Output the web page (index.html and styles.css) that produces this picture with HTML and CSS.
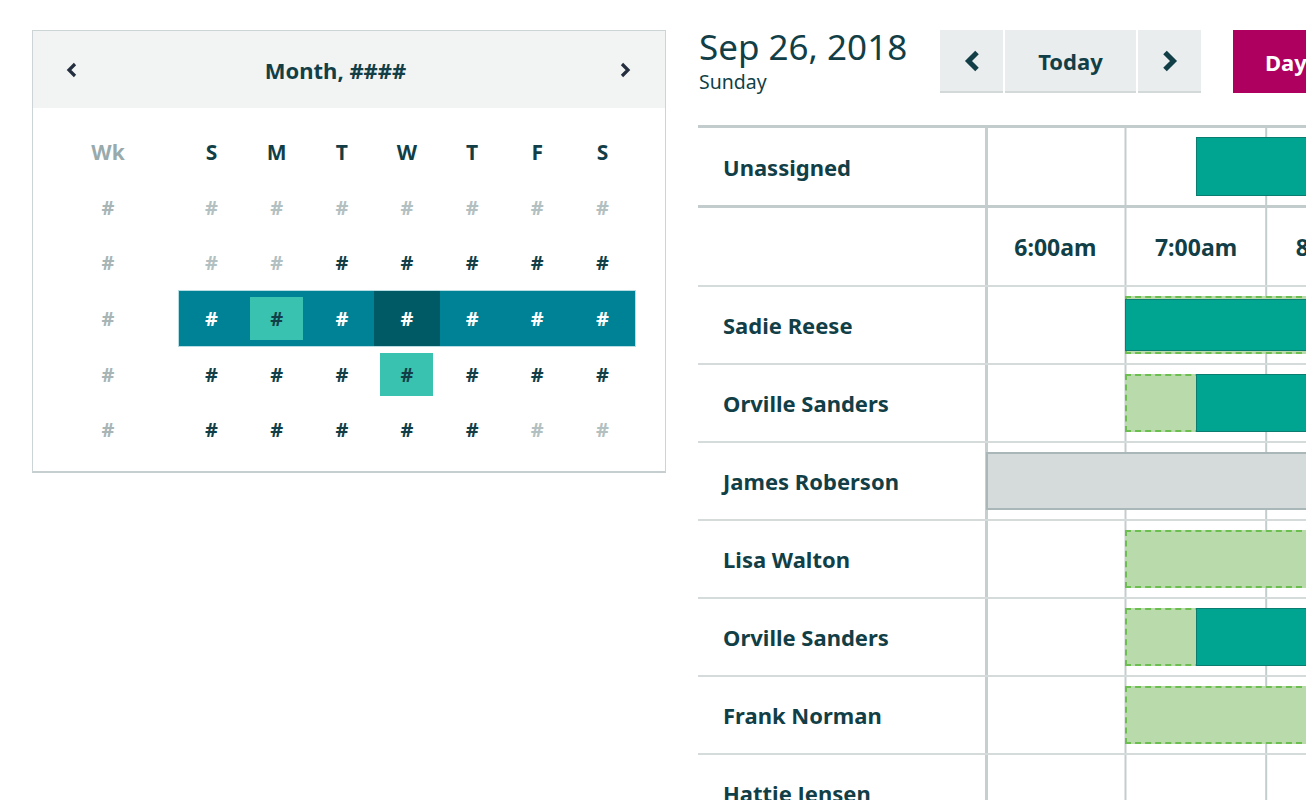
FILE: index.html
```html
<!DOCTYPE html>
<html lang="en">
<head>
<meta charset="utf-8">
<title>Schedule</title>
<link rel="stylesheet" href="styles.css">
</head>
<body>
<div class="page">
  <section class="cal">
    <div class="cal-head">
      <span class="cal-nav"><svg width="11" height="16" viewBox="0 0 11 16"><path d="M9 2 L3 8 L9 14" fill="none" stroke="#232f3e" stroke-width="3.2"/></svg></span>
      <div class="cal-title">Month, ####</div>
      <span class="cal-nav"><svg width="11" height="16" viewBox="0 0 11 16"><path d="M2 2 L8 8 L2 14" fill="none" stroke="#232f3e" stroke-width="3.2"/></svg></span>
    </div>
    <div class="cal-body">
      <div class="cal-row dow">
        <div class="wk wk-label">Wk</div>
        <div class="week">
          <div class="d">S</div><div class="d">M</div><div class="d">T</div><div class="d">W</div><div class="d">T</div><div class="d">F</div><div class="d">S</div>
        </div>
      </div>
      <div class="cal-row">
        <div class="wk">#</div>
        <div class="week">
          <div class="d muted">#</div><div class="d muted">#</div><div class="d muted">#</div><div class="d muted">#</div><div class="d muted">#</div><div class="d muted">#</div><div class="d muted">#</div>
        </div>
      </div>
      <div class="cal-row">
        <div class="wk">#</div>
        <div class="week">
          <div class="d muted">#</div><div class="d muted">#</div><div class="d">#</div><div class="d">#</div><div class="d">#</div><div class="d">#</div><div class="d">#</div>
        </div>
      </div>
      <div class="cal-row">
        <div class="wk">#</div>
        <div class="week selected">
          <div class="d">#</div><div class="d"><span class="mark">#</span></div><div class="d">#</div><div class="d current">#</div><div class="d">#</div><div class="d">#</div><div class="d">#</div>
        </div>
      </div>
      <div class="cal-row">
        <div class="wk">#</div>
        <div class="week">
          <div class="d">#</div><div class="d">#</div><div class="d">#</div><div class="d"><span class="mark">#</span></div><div class="d">#</div><div class="d">#</div><div class="d">#</div>
        </div>
      </div>
      <div class="cal-row">
        <div class="wk">#</div>
        <div class="week">
          <div class="d">#</div><div class="d">#</div><div class="d">#</div><div class="d">#</div><div class="d">#</div><div class="d muted">#</div><div class="d muted">#</div>
        </div>
      </div>
    </div>
  </section>

  <section class="sched">
    <header class="sched-head">
      <div class="date">
        <div class="date-main">Sep 26, 2018</div>
        <div class="date-sub">Sunday</div>
      </div>
      <div class="btn-group">
        <button class="btn btn-icon"><svg width="18" height="22" viewBox="0 0 18 22"><path d="M14 2.5 L5.5 11 L14 19.5" fill="none" stroke="#123f47" stroke-width="5"/></svg></button>
        <button class="btn btn-today">Today</button>
        <button class="btn btn-icon"><svg width="18" height="22" viewBox="0 0 18 22"><path d="M4 2.5 L12.5 11 L4 19.5" fill="none" stroke="#123f47" stroke-width="5"/></svg></button>
      </div>
      <button class="btn-day">Day</button>
    </header>

    <div class="grid">
      <div class="row row-unassigned">
        <div class="name">Unassigned</div>
        <div class="track">
          <div class="bar bar-teal" style="left:208px"></div>
        </div>
      </div>
      <div class="row row-times">
        <div class="name"></div>
        <div class="track times">
          <div class="time">6:00am</div>
          <div class="time">7:00am</div>
          <div class="time">8:00am</div>
          <div class="time">9:00am</div>
        </div>
      </div>
      <div class="row">
        <div class="name">Sadie Reese</div>
        <div class="track">
          <div class="bar bar-avail" style="left:137px">
            <div class="inner inner-full" style="left:-2px"></div>
          </div>
        </div>
      </div>
      <div class="row">
        <div class="name">Orville Sanders</div>
        <div class="track">
          <div class="bar bar-avail" style="left:137px">
            <div class="inner inner-edge" style="left:69px"></div>
          </div>
        </div>
      </div>
      <div class="row">
        <div class="name">James Roberson</div>
        <div class="track">
          <div class="bar bar-off" style="left:-2px"></div>
        </div>
      </div>
      <div class="row">
        <div class="name">Lisa Walton</div>
        <div class="track">
          <div class="bar bar-avail" style="left:137px"></div>
        </div>
      </div>
      <div class="row">
        <div class="name">Orville Sanders</div>
        <div class="track">
          <div class="bar bar-avail" style="left:137px">
            <div class="inner inner-edge" style="left:69px"></div>
          </div>
        </div>
      </div>
      <div class="row">
        <div class="name">Frank Norman</div>
        <div class="track">
          <div class="bar bar-avail" style="left:137px"></div>
        </div>
      </div>
      <div class="row">
        <div class="name">Hattie Jensen</div>
        <div class="track"></div>
      </div>
    </div>
  </section>
</div>
</body>
</html>
```

FILE: styles.css
```css
* { box-sizing: border-box; }

html, body {
  margin: 0;
  padding: 0;
  background: #ffffff;
  overflow: hidden;
}

body {
  font-family: "Noto Sans", "Open Sans", sans-serif;
  color: #123f47;
  width: 1306px;
  height: 800px;
}

.page {
  display: flex;
  align-items: flex-start;
  padding: 30px 0 0 32px;
  gap: 32px;
}

/* ---------- Calendar ---------- */
.cal {
  flex: 0 0 634px;
  width: 634px;
  height: 443px;
  border: 1px solid #cdd4d5;
  border-bottom: 2px solid #c6cecf;
}

.cal-head {
  height: 77px;
  background: #f2f3f3;
  display: flex;
  align-items: center;
  padding: 0 34px 0 33px;
}

.cal-nav {
  display: flex;
  width: 11px;
  height: 16px;
}

.cal-title {
  flex: 1 1 auto;
  text-align: center;
  padding-right: 26px;
  font-weight: 700;
  font-size: 22px;
  color: #123f47;
}

.cal-body {
  padding: 16px 0 0 42px;
}

.cal-row {
  display: flex;
  height: 55.6px;
  align-items: stretch;
}

.wk {
  width: 66px;
  display: flex;
  align-items: center;
  justify-content: center;
  font-weight: 700;
  font-size: 20px;
  color: #a7b5b7;
}

.wk-label {
  font-size: 21px;
  color: #98aaac;
}

.week {
  margin-left: 38px;
  width: 456px;
  display: flex;
}

.d {
  flex: 1 1 0;
  display: flex;
  align-items: center;
  justify-content: center;
  font-weight: 700;
  font-size: 20px;
  color: #123f47;
}

.dow .d {
  font-size: 21px;
}

.d.muted {
  color: #b3c0c1;
}

.week.selected {
  background: #008296;
  box-shadow: 0 0 0 1px #b6dde2;
}

.week.selected .d {
  color: #ffffff;
}

.week.selected .d.current {
  background: #005a66;
}

.mark {
  display: flex;
  align-items: center;
  justify-content: center;
  width: 53px;
  height: 43px;
  background: #3ac2b1;
  color: #123f47;
}

.week.selected .mark {
  color: #123f47;
}

/* ---------- Schedule ---------- */
.sched {
  flex: 0 0 608px;
  width: 608px;
  overflow: hidden;
}

.sched-head {
  height: 95px;
  display: flex;
  align-items: flex-start;
}

.date {
  flex: 0 0 242px;
  padding-left: 1px;
}

.date-main {
  font-size: 35px;
  line-height: 34px;
  color: #123f47;
  white-space: nowrap;
}

.date-sub {
  font-size: 19.5px;
  line-height: 22px;
  margin-top: 7px;
  color: #123f47;
}

.btn-group {
  flex: 0 0 auto;
  display: flex;
  gap: 2px;
}

.btn {
  height: 63px;
  border: 0;
  border-bottom: 2px solid #d3d9d9;
  background: #eaeded;
  font-family: inherit;
  font-weight: 700;
  font-size: 22px;
  color: #123f47;
  display: flex;
  align-items: center;
  justify-content: center;
  padding: 0;
}

.btn-icon {
  width: 63px;
}

.btn-today {
  width: 131px;
}

.btn-day {
  flex: 0 0 auto;
  margin-left: 32px;
  height: 63px;
  border: 0;
  background: #ad005f;
  color: #ffffff;
  font-family: inherit;
  font-weight: 700;
  font-size: 22px;
  padding: 0 32px 0 32px;
  text-align: left;
}

.grid {
  border-top: 3px solid #c3cccd;
  width: 1300px;
}

.row {
  display: flex;
  height: 78px;
  border-bottom: 2px solid #d5dbdb;
}

.row-unassigned {
  height: 80px;
  border-bottom: 3px solid #c3cccd;
}

.row-times {
  height: 79px;
}

.name {
  flex: 0 0 290px;
  width: 290px;
  border-right: 3px solid #c6cecf;
  padding-left: 25px;
  display: flex;
  align-items: center;
  font-weight: 700;
  font-size: 22px;
  color: #123f47;
  white-space: nowrap;
}

.track {
  flex: 1 1 auto;
  position: relative;
  background-image: linear-gradient(to right, #c4cdce 1.5px, transparent 1.5px);
  background-size: 140.7px 100%;
  background-position: 136.5px 0;
  background-repeat: repeat-x;
}

.track.times {
  display: flex;
  align-items: center;
}

.time {
  flex: 0 0 140.7px;
  text-align: center;
  font-weight: 700;
  font-size: 23px;
  color: #123f47;
}

.time:first-child {
  margin-left: -3px;
}

.bar {
  position: absolute;
  top: 9px;
  bottom: 9px;
  width: 700px;
}

.bar-teal {
  background: #00a591;
  border: 1px solid #0b7d70;
}

.bar-avail {
  background: #b9dbab;
  border: 2px dashed #6dbe50;
}

.bar-off {
  background: #d5dbdb;
  border: 2px solid #aab7b8;
}

.inner {
  position: absolute;
  right: -2px;
  background: #00a591;
  border: 1px solid #0b7d70;
}

.inner-full {
  top: 1px;
  bottom: 1px;
}

.inner-edge {
  top: -2px;
  bottom: -2px;
}
```
